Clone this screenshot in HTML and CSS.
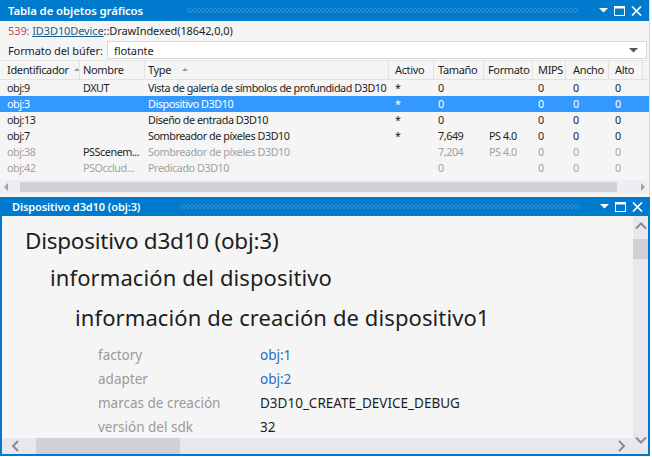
FILE: index.html
```html
<!DOCTYPE html>
<html lang="es">
<head>
<meta charset="utf-8">
<title>Tabla de objetos gráficos</title>
<link rel="stylesheet" href="styles.css">
</head>
<body>
<div class="window">
  <section class="panel panel-top">
    <header class="titlebar">
      <span class="title">Tabla de objetos gráficos</span>
      <span class="grip"></span>
      <span class="tb-icons">
        <svg width="9" height="5" viewBox="0 0 9 5"><polygon points="0,0 9,0 4.5,4.5" fill="#fff"/></svg>
        <svg width="11" height="10" viewBox="0 0 11 10"><rect x="0.5" y="0.5" width="10" height="9" fill="none" stroke="#fff"/><rect x="0" y="0" width="11" height="2.5" fill="#fff"/></svg>
        <svg width="11" height="10" viewBox="0 0 11 10"><path d="M1 0.5 L10 9.5 M10 0.5 L1 9.5" stroke="#fff" stroke-width="1.7"/></svg>
      </span>
    </header>
    <div class="callbar"><span class="callnum">539:</span> <span class="calllink">ID3D10Device</span>::DrawIndexed(18642,0,0)</div>
    <div class="formatbar">
      <span class="flabel">Formato del búfer:</span>
      <div class="combo">
        <span>flotante</span>
        <svg width="9" height="5" viewBox="0 0 9 5"><polygon points="0,0 9,0 4.5,4.5" fill="#555"/></svg>
      </div>
    </div>
    <div class="table">
      <div class="row thead">
        <div class="c c1">Identificador <span class="sort"></span></div>
        <div class="c c2">Nombre</div>
        <div class="c c3">Type <span class="sort sort-type"></span></div>
        <div class="c c4">Activo</div>
        <div class="c c5">Tamaño</div>
        <div class="c c6">Formato</div>
        <div class="c c7">MIPS</div>
        <div class="c c8">Ancho</div>
        <div class="c c9">Alto</div>
      </div>
      <div class="row">
        <div class="c c1">obj:9</div><div class="c c2">DXUT</div><div class="c c3">Vista de galería de símbolos de profundidad D3D10</div><div class="c c4">*</div><div class="c c5">0</div><div class="c c6"></div><div class="c c7">0</div><div class="c c8">0</div><div class="c c9">0</div>
      </div>
      <div class="row selected">
        <div class="c c1">obj:3</div><div class="c c2"></div><div class="c c3">Dispositivo D3D10</div><div class="c c4">*</div><div class="c c5">0</div><div class="c c6"></div><div class="c c7">0</div><div class="c c8">0</div><div class="c c9">0</div>
      </div>
      <div class="row">
        <div class="c c1">obj:13</div><div class="c c2"></div><div class="c c3">Diseño de entrada D3D10</div><div class="c c4">*</div><div class="c c5">0</div><div class="c c6"></div><div class="c c7">0</div><div class="c c8">0</div><div class="c c9">0</div>
      </div>
      <div class="row">
        <div class="c c1">obj:7</div><div class="c c2"></div><div class="c c3">Sombreador de píxeles D3D10</div><div class="c c4">*</div><div class="c c5">7,649</div><div class="c c6">PS 4.0</div><div class="c c7">0</div><div class="c c8">0</div><div class="c c9">0</div>
      </div>
      <div class="row dim">
        <div class="c c1">obj:38</div><div class="c c2 strong">PSScenem...</div><div class="c c3">Sombreador de píxeles D3D10</div><div class="c c4"></div><div class="c c5">7,204</div><div class="c c6">PS 4.0</div><div class="c c7">0</div><div class="c c8">0</div><div class="c c9">0</div>
      </div>
      <div class="row dim">
        <div class="c c1">obj:42</div><div class="c c2">PSOcclud...</div><div class="c c3">Predicado D3D10</div><div class="c c4"></div><div class="c c5">0</div><div class="c c6"></div><div class="c c7">0</div><div class="c c8">0</div><div class="c c9">0</div>
      </div>
    </div>
    <div class="hscroll-top">
      <span class="tri tri-left"></span>
      <span class="thumb-top"></span>
      <span class="tri tri-right"></span>
    </div>
  </section>

  <section class="panel panel-bottom">
    <header class="titlebar">
      <span class="title">Dispositivo d3d10 (obj:3)</span>
      <span class="grip"></span>
      <span class="tb-icons">
        <svg width="9" height="5" viewBox="0 0 9 5"><polygon points="0,0 9,0 4.5,4.5" fill="#fff"/></svg>
        <svg width="11" height="10" viewBox="0 0 11 10"><rect x="0.5" y="0.5" width="10" height="9" fill="none" stroke="#fff"/><rect x="0" y="0" width="11" height="2.5" fill="#fff"/></svg>
        <svg width="11" height="10" viewBox="0 0 11 10"><path d="M1 0.5 L10 9.5 M10 0.5 L1 9.5" stroke="#fff" stroke-width="1.7"/></svg>
      </span>
    </header>
    <div class="body">
      <div class="main">
        <div class="doc">
          <h1>Dispositivo d3d10 (obj:3)</h1>
          <h2>información del dispositivo</h2>
          <h3>información de creación de dispositivo1</h3>
          <dl class="props">
            <div class="prop"><dt>factory</dt><dd class="link">obj:1</dd></div>
            <div class="prop"><dt>adapter</dt><dd class="link">obj:2</dd></div>
            <div class="prop"><dt>marcas de creación</dt><dd>D3D10_CREATE_DEVICE_DEBUG</dd></div>
            <div class="prop"><dt>versión del sdk</dt><dd>32</dd></div>
          </dl>
        </div>
        <div class="hscroll">
          <svg width="10" height="12" viewBox="0 0 10 12"><path d="M8 1 L3 6 L8 11" fill="none" stroke="#868999" stroke-width="2"/></svg>
          <span class="hthumb"></span>
          <svg class="right-chev" width="10" height="12" viewBox="0 0 10 12"><path d="M2 1 L7 6 L2 11" fill="none" stroke="#868999" stroke-width="2"/></svg>
        </div>
      </div>
      <div class="vscroll">
        <svg width="12" height="9" viewBox="0 0 12 9"><path d="M1 7.5 L6 2.5 L11 7.5" fill="none" stroke="#868999" stroke-width="2"/></svg>
        <span class="vthumb"></span>
        <svg class="down-chev" width="12" height="9" viewBox="0 0 12 9"><path d="M1 1.5 L6 6.5 L11 1.5" fill="none" stroke="#868999" stroke-width="2"/></svg>
      </div>
    </div>
  </section>
</div>
</body>
</html>
```
FILE: styles.css
```css
* { box-sizing: border-box; }
html, body { margin: 0; padding: 0; background: #fff; }
body {
  font-family: "Noto Sans", "Open Sans", sans-serif;
  color: #1e1e1e;
  font-size: 11px;
}
.window {
  width: 650px;
  height: 456px;
  display: flex;
  flex-direction: column;
  background: #f5f5f5;
}
.panel { display: flex; flex-direction: column; }
.panel-top {
  height: 197px;
  border-right: 1px solid #c7dcef;
}
.panel-bottom {
  flex: 1;
  border: 2px solid #007acc;
  border-top: 0;
  min-height: 0;
}

/* title bars */
.titlebar {
  height: 21px;
  flex: none;
  background: #007acc;
  color: #fff;
  display: flex;
  align-items: center;
  padding-left: 8px;
  padding-right: 7px;
}
.panel-bottom .titlebar { height: 19px; margin: 0 -2px; padding-left: 12px; }
.title { font-weight: 600; font-size: 11.4px; letter-spacing: -0.1px; white-space: nowrap; }
.panel-bottom .title { font-size: 11px; }
.grip {
  flex: 1;
  height: 5px;
  margin: 0 20px 0 44px;
  background-image:
    radial-gradient(circle, #4a9fdc 0.55px, transparent 0.9px),
    radial-gradient(circle, #4a9fdc 0.55px, transparent 0.9px);
  background-size: 4px 4px, 4px 4px;
  background-position: 0 0, 2px 2px;
}
.panel-bottom .grip { margin-left: 40px; }
.tb-icons { display: flex; align-items: center; gap: 6px; }
.tb-icons svg { display: block; }

/* call line */
.callbar {
  height: 19px;
  line-height: 19px;
  padding-left: 8px;
  font-size: 11px;
  letter-spacing: -0.1px;
  white-space: nowrap;
}
.callnum { color: #c0504d; }
.calllink { color: #1e5c8c; text-decoration: underline; }

/* format bar */
.formatbar {
  height: 21px;
  display: flex;
  align-items: center;
  padding: 0 2px 0 8px;
  border-bottom: 1px solid #e6e6e6;
  letter-spacing: -0.1px;
}
.flabel { white-space: nowrap; width: 99px; flex: none; }
.combo {
  flex: 1;
  height: 18px;
  background: #fff;
  border: 1px solid #d9d9e0;
  display: flex;
  align-items: center;
  justify-content: space-between;
  padding: 0 8px 0 6px;
}

/* table */
.table { flex: none; }
.row {
  display: grid;
  grid-template-columns: 80px 65px 244px 45px 50px 49px 33px 43px 34px;
  height: 16px;
  line-height: 16px;
  white-space: nowrap;
  font-size: 10.8px;
  letter-spacing: -0.45px;
}
.row .c { overflow: hidden; }
.c1 { padding-left: 7px; }
.c2 { padding-left: 3px; }
.c3 { padding-left: 3px; }
.c4 { padding-left: 6px; }
.c5 { padding-left: 4px; }
.c6 { padding-left: 5px; }
.c7 { padding-left: 5px; }
.c8 { padding-left: 7px; }
.c9 { padding-left: 6px; }
.thead {
  height: 19px;
  line-height: 18px;
  border-bottom: 1px solid #e2e2e2;
  font-size: 11px;
  letter-spacing: -0.35px;
}
.thead .c { border-right: 1px solid #e2e2e2; }
.thead .c6 { padding-left: 4px; }
.sort {
  display: inline-block;
  width: 0; height: 0;
  border-left: 3px solid transparent;
  border-right: 3px solid transparent;
  border-bottom: 3px solid #9a9a9a;
  vertical-align: 3px;
  margin-left: 3px;
}
.sort-type { margin-left: 8px; }
.selected { background: #3399ff; color: #fff; }
.dim { color: #a2a2a2; }
.dim .strong { color: #1e1e1e; }

/* top hscroll */
.hscroll-top {
  margin-top: 4px;
  height: 14px;
  display: flex;
  align-items: center;
  padding: 0 4px;
  background: #eeeef2;
}
.tri { width: 0; height: 0; border-top: 4px solid transparent; border-bottom: 4px solid transparent; }
.tri-left { border-right: 4px solid #a0a0a8; }
.tri-right { border-left: 4px solid #a0a0a8; }
.thumb-top {
  flex: 1;
  height: 10px;
  background: #d0d0d6;
  margin: 0 24px 0 12px;
}

/* bottom body */
.body { flex: 1; display: flex; min-height: 0; }
.main { flex: 1; display: flex; flex-direction: column; min-width: 0; }
.doc {
  flex: 1;
  padding: 10px 0 0 23px;
  overflow: hidden;
  background: #f5f5f5;
}
.doc h1 {
  margin: 0;
  font-size: 22.5px;
  font-weight: 400;
  line-height: 30px;
  letter-spacing: -0.25px;
  white-space: nowrap;
}
.doc h2 {
  margin: 6px 0 0 25px;
  font-size: 22px;
  font-weight: 400;
  line-height: 30px;
  letter-spacing: 0.1px;
  white-space: nowrap;
}
.doc h3 {
  margin: 10px 0 0 50px;
  font-size: 22px;
  font-weight: 400;
  line-height: 30px;
  letter-spacing: 0.1px;
  white-space: nowrap;
}
.props { margin: 11px 0 0 73px; }
.prop {
  display: grid;
  grid-template-columns: 162px 1fr;
  height: 24px;
  line-height: 24px;
  font-size: 13.5px;
}
.prop dt { color: #9a9a9a; }
.prop dd { margin: 0; color: #1e1e1e; }
.prop dd.link { color: #1e6fc8; }

.hscroll {
  height: 16px;
  flex: none;
  background: #e8e8ec;
  display: flex;
  align-items: center;
  padding: 0 6px 0 8px;
}
.hthumb {
  width: 144px;
  height: 16px;
  background: #d0d0d6;
  margin-left: 16px;
}
.right-chev { margin-left: auto; }
.vscroll {
  width: 15px;
  flex: none;
  background: #e8e8ec;
  display: flex;
  flex-direction: column;
  align-items: center;
  padding: 5px 0 9px;
}
.vthumb {
  width: 15px;
  height: 20px;
  background: #d0d0d6;
  margin-top: 9px;
}
.down-chev { margin-top: auto; }
```
